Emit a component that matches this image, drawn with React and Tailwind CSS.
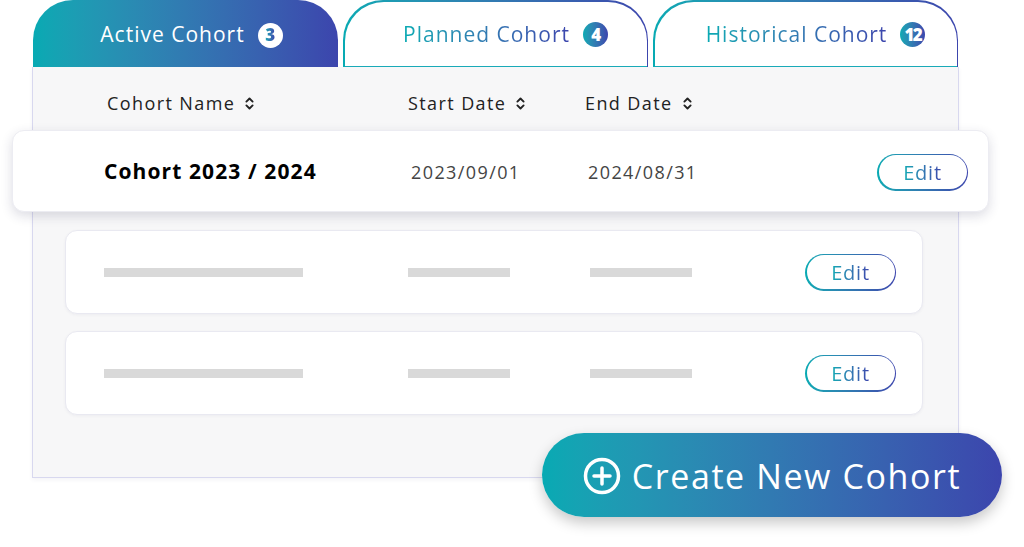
import { ChevronsUpDown } from 'lucide-react';

const FONT = { fontFamily: '"Open Sans", "Noto Sans", sans-serif' };

const GRAD = 'bg-gradient-to-r from-[#07aab3] to-[#3c45ad]';

const Badge = ({ value, active }) =>
  active ? (
    <span className="ml-[13px] flex h-[25px] w-[25px] items-center justify-center rounded-full bg-white">
      <span className={`${GRAD} bg-clip-text text-[17px] font-extrabold text-transparent`}>{value}</span>
    </span>
  ) : (
    <span className={`ml-[13px] flex h-[25px] w-[25px] items-center justify-center rounded-full ${GRAD} text-[17px] font-extrabold tracking-[-1.5px] text-white`}>
      {value}
    </span>
  );

const Tab = ({ label, count, active }) => {
  if (active) {
    return (
      <div className={`flex h-[67px] w-[305px] items-center justify-center rounded-t-[40px] pl-[12px] pt-[3px] ${GRAD}`}>
        <span className="text-[21px] tracking-[1px] text-white">{label}</span>
        <Badge value={count} active />
      </div>
    );
  }
  return (
    <div className={`h-[67px] w-[305px] rounded-t-[40px] ${GRAD} p-[1.5px] pb-0`}>
      <div className="flex h-full w-full items-center justify-center rounded-t-[39px] border-b-[1.5px] border-[#19aab8] bg-white pl-[20px] pt-[2px]">
        <span className={`${GRAD} bg-clip-text text-[21px] tracking-[1px] text-transparent`}>{label}</span>
        <Badge value={count} />
      </div>
    </div>
  );
};

const SortHead = ({ label, className }) => (
  <div className={`flex items-center text-[18px] tracking-[1.4px] text-[#222] ${className}`}>
    {label}
    <ChevronsUpDown size={15} strokeWidth={3} className="ml-[7px] text-[#222]" />
  </div>
);

const EditButton = () => (
  <div className={`rounded-full ${GRAD} p-[1.5px]`}>
    <div className="flex h-[34px] w-[88px] items-center justify-center rounded-full bg-white pt-[1px]">
      <span className={`${GRAD} bg-clip-text text-[20px] tracking-[0.8px] text-transparent`}>Edit</span>
    </div>
  </div>
);

const SkeletonRow = () => (
  <div className="ml-[32px] mr-[35px] flex h-[84px] items-center rounded-[12px] border border-[#e9e9f1] bg-white shadow-[0_1px_3px_rgba(60,60,120,0.06)]">
    <div className="ml-[38px] h-[9px] w-[199px] bg-[#d9d9d9]" />
    <div className="ml-[105px] h-[9px] w-[102px] bg-[#d9d9d9]" />
    <div className="ml-[80px] h-[9px] w-[102px] bg-[#d9d9d9]" />
    <div className="ml-auto mr-[26px]">
      <EditButton />
    </div>
  </div>
);

export default function App() {
  return (
    <div className="relative h-[547px] w-[1024px] overflow-hidden bg-white" style={FONT}>
      <div className="ml-[33px] flex gap-[5px]">
        <Tab label="Active Cohort" count="3" active />
        <Tab label="Planned Cohort" count="4" />
        <Tab label="Historical Cohort" count="12" />
      </div>

      <div className="ml-[32px] h-[411px] w-[927px] border-x border-b border-[#d8d8ef] bg-[#f7f7f8] shadow-[0_2px_4px_rgba(60,60,120,0.06)]">
        <div className="flex h-[63px] items-center pb-[12px] pt-[22px]">
          <SortHead label="Cohort Name" className="ml-[74px] w-[301px]" />
          <SortHead label="Start Date" className="w-[177px]" />
          <SortHead label="End Date" />
        </div>

        <div className="-ml-[21px] -mr-[31px] flex h-[82px] items-center rounded-[12px] border border-[#ececf2] bg-white pt-[2px] shadow-[0_4px_12px_rgba(40,40,80,0.16)]">
          <div className="ml-[91px] w-[307px] text-[21px] font-bold tracking-[1.1px] text-black">Cohort 2023 / 2024</div>
          <div className="w-[177px] text-[18px] tracking-[1.4px] text-[#444]">2023/09/01</div>
          <div className="text-[18px] tracking-[1.4px] text-[#444]">2024/08/31</div>
          <div className="ml-auto mr-[20px]">
            <EditButton />
          </div>
        </div>

        <div className="mt-[18px] flex flex-col gap-[17px]">
          <SkeletonRow />
          <SkeletonRow />
        </div>
      </div>

      <button className={`absolute left-[542px] top-[433px] flex h-[84px] w-[460px] items-center justify-center rounded-full pt-[2px] ${GRAD} shadow-[0_6px_14px_rgba(0,0,0,0.22)]`}>
        <svg width="38" height="38" viewBox="0 0 38 38" fill="none" stroke="white" strokeWidth="3.5" strokeLinecap="round">
          <circle cx="19" cy="19" r="16.5" />
          <path d="M19 11v16M11 19h16" />
        </svg>
        <span className="ml-[11px] text-[34px] tracking-[1.6px] text-white">Create New Cohort</span>
      </button>
    </div>
  );
}
